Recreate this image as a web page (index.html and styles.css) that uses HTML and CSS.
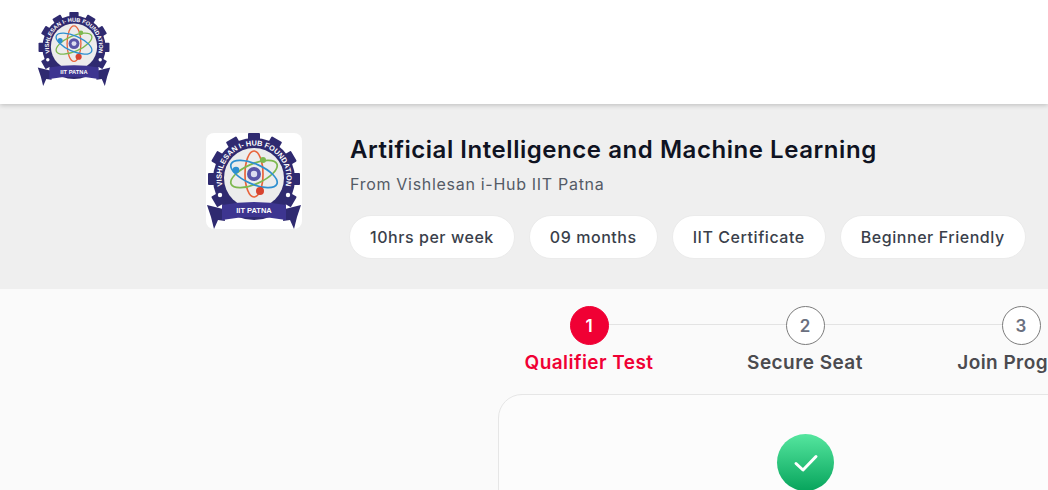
FILE: index.html
```html
<!DOCTYPE html>
<html lang="en">
<head>
    <meta charset="UTF-8">
    <meta name="viewport" content="width=device-width, initial-scale=1.0">
    <title>Artificial Intelligence and Machine Learning</title>
    <link rel="stylesheet" href="styles.css">
</head>
<body>
    <svg class="defs" width="0" height="0">
        <defs>
            <symbol id="hubLogo" viewBox="0 0 96 96">
                <g fill="#2f2a70">
                    <circle cx="48" cy="46" r="41"/>
                    <rect x="42" y="0" width="12" height="10" rx="1"/>
                    <rect x="42" y="0" width="12" height="10" rx="1" transform="rotate(30 48 46)"/>
                    <rect x="42" y="0" width="12" height="10" rx="1" transform="rotate(60 48 46)"/>
                    <rect x="42" y="0" width="12" height="10" rx="1" transform="rotate(90 48 46)"/>
                    <rect x="42" y="0" width="12" height="10" rx="1" transform="rotate(120 48 46)"/>
                    <rect x="42" y="0" width="12" height="10" rx="1" transform="rotate(-30 48 46)"/>
                    <rect x="42" y="0" width="12" height="10" rx="1" transform="rotate(-60 48 46)"/>
                    <rect x="42" y="0" width="12" height="10" rx="1" transform="rotate(-90 48 46)"/>
                    <rect x="42" y="0" width="12" height="10" rx="1" transform="rotate(-120 48 46)"/>
                </g>
                <circle cx="48" cy="45" r="30" fill="#ececec"/>
                <circle cx="14" cy="62" r="2.2" fill="#fff"/>
                <circle cx="82" cy="62" r="2.2" fill="#fff"/>
                <path id="ringPath" d="M18.5 58.7 A32.5 32.5 0 1 1 77.5 58.7" fill="none"/>
                <text class="logo-ring"><textPath href="#ringPath" startOffset="50%" text-anchor="middle">VISHLESAN I- HUB FOUNDATION</textPath></text>
                <g fill="none" stroke-width="1.7">
                    <ellipse cx="48" cy="41" rx="9" ry="23" stroke="#e8643c"/>
                    <ellipse cx="48" cy="41" rx="10" ry="25" stroke="#7db84f" transform="rotate(66 48 41)"/>
                    <ellipse cx="48" cy="41" rx="10" ry="25" stroke="#2e8fd0" transform="rotate(-66 48 41)"/>
                </g>
                <circle cx="48" cy="41" r="7" fill="#5a55a8"/>
                <circle cx="48" cy="41" r="3.2" fill="#dcdcf0"/>
                <circle cx="30" cy="37" r="3.3" fill="#2e8fd0"/>
                <circle cx="57" cy="27" r="3" fill="#7db84f"/>
                <circle cx="54" cy="58" r="4" fill="#d8432f"/>
                <path d="M1 72 L17 76 L19 88 L12 87 L8 96 L5 84 Z" fill="#2f2a70"/>
                <path d="M95 72 L79 76 L77 88 L84 87 L88 96 L91 84 Z" fill="#2f2a70"/>
                <path d="M16 72 Q48 66 80 72 L80 87 Q48 81 16 87 Z" fill="#3d3590"/>
                <text class="logo-band" x="48" y="80" text-anchor="middle">IIT PATNA</text>
            </symbol>
        </defs>
    </svg>

    <header class="topbar">
        <svg class="topbar-logo"><use href="#hubLogo"/></svg>
    </header>

    <section class="hero">
        <div class="hero-thumb">
            <svg class="hero-logo"><use href="#hubLogo"/></svg>
        </div>
        <div class="hero-info">
            <h1>Artificial Intelligence and Machine Learning</h1>
            <p class="hero-from">From Vishlesan i-Hub IIT Patna</p>
            <div class="pills">
                <span class="pill">10hrs per week</span>
                <span class="pill">09 months</span>
                <span class="pill">IIT Certificate</span>
                <span class="pill">Beginner Friendly</span>
            </div>
        </div>
    </section>

    <main class="content">
        <div class="steps">
            <div class="step active">
                <div class="step-num">1</div>
                <div class="step-label">Qualifier Test</div>
            </div>
            <div class="step">
                <div class="step-num">2</div>
                <div class="step-label">Secure Seat</div>
            </div>
            <div class="step">
                <div class="step-num">3</div>
                <div class="step-label">Join Program</div>
            </div>
        </div>
        <div class="card">
            <div class="check">
                <svg width="30" height="30" viewBox="0 0 30 30"><path d="M5 15.5 L12 22 L25 8.5" fill="none" stroke="#fff" stroke-width="3" stroke-linecap="round" stroke-linejoin="round"/></svg>
            </div>
        </div>
    </main>
</body>
</html>
```

FILE: styles.css
```css
/* General Styles */
html, body {
    height: 490px;
    overflow: hidden;
}
body {
    margin: 0;
    font-family: "Inter", "Open Sans", sans-serif;
    background-color: #fafafa;
    color: #0f1322;
}
.defs {
    display: block;
    height: 0;
}
.logo-ring {
    font-family: "Liberation Sans", sans-serif;
    font-size: 7.4px;
    font-weight: 700;
    fill: #fff;
}
.logo-band {
    font-family: "Liberation Sans", sans-serif;
    font-size: 7.5px;
    font-weight: 700;
    fill: #fff;
}

/* Top bar */
.topbar {
    height: 104px;
    box-sizing: border-box;
    padding: 12px 0 0 37px;
    background-color: #fff;
    box-shadow: 0 1px 5px rgba(0, 0, 0, 0.22);
    position: relative;
}
.topbar-logo {
    display: block;
    width: 74px;
    height: 74px;
}

/* Course band */
.hero {
    height: 185px;
    box-sizing: border-box;
    padding: 29px 0 0 206px;
    display: flex;
    gap: 48px;
    background-color: #efefef;
}
.hero-thumb {
    width: 96px;
    height: 96px;
    flex-shrink: 0;
    border-radius: 8px;
    background-color: #fff;
}
.hero-logo {
    display: block;
    width: 96px;
    height: 96px;
}
.hero-info {
    white-space: nowrap;
}
.hero-info h1 {
    margin: 0;
    font-size: 24px;
    line-height: 34px;
    font-weight: 600;
    letter-spacing: 0.55px;
}
.hero-from {
    margin: 5px 0 0;
    font-size: 16px;
    line-height: 24px;
    color: #545b66;
    letter-spacing: 0.7px;
}
.pills {
    display: flex;
    gap: 14px;
    margin: 19px 0 0 -1px;
}
.pill {
    height: 44px;
    box-sizing: border-box;
    padding: 0 20px;
    display: flex;
    align-items: center;
    border: 1px solid #ebebeb;
    border-radius: 22px;
    background-color: #fff;
    font-size: 16px;
    font-weight: 500;
    color: #3a3f4b;
    letter-spacing: 0.55px;
}

/* Steps */
.content {
    padding-top: 17px;
    white-space: nowrap;
}
.steps {
    display: grid;
    grid-template-columns: repeat(3, 216px);
    margin-left: 481px;
    width: 648px;
    position: relative;
}
.steps::before {
    content: "";
    position: absolute;
    left: 108px;
    right: 108px;
    top: 18px;
    height: 1px;
    background-color: #e3e3e3;
}
.step {
    display: flex;
    flex-direction: column;
    align-items: center;
    position: relative;
}
.step-num {
    width: 39px;
    height: 39px;
    box-sizing: border-box;
    display: flex;
    align-items: center;
    justify-content: center;
    border: 1px solid #7c7c7c;
    border-radius: 50%;
    background-color: #fff;
    font-size: 17px;
    font-weight: 600;
    color: #6b7080;
}
.step-label {
    margin-top: 4px;
    font-size: 19px;
    line-height: 27px;
    font-weight: 600;
    color: #4b4b4f;
    letter-spacing: 0.45px;
}
.step.active .step-num {
    border-color: #f00034;
    background-color: #f00034;
    color: #fff;
}
.step.active .step-label {
    color: #f00034;
}

/* Card */
.card {
    width: 615px;
    height: 300px;
    box-sizing: border-box;
    margin: 18px 0 0 498px;
    padding-top: 39px;
    border: 1px solid #e6e6e6;
    border-radius: 24px;
    background-color: #fcfcfc;
}
.check {
    width: 57px;
    height: 57px;
    margin: 0 auto;
    display: flex;
    align-items: center;
    justify-content: center;
    border-radius: 50%;
    background: linear-gradient(#55e69f, #07a45c);
}
```
